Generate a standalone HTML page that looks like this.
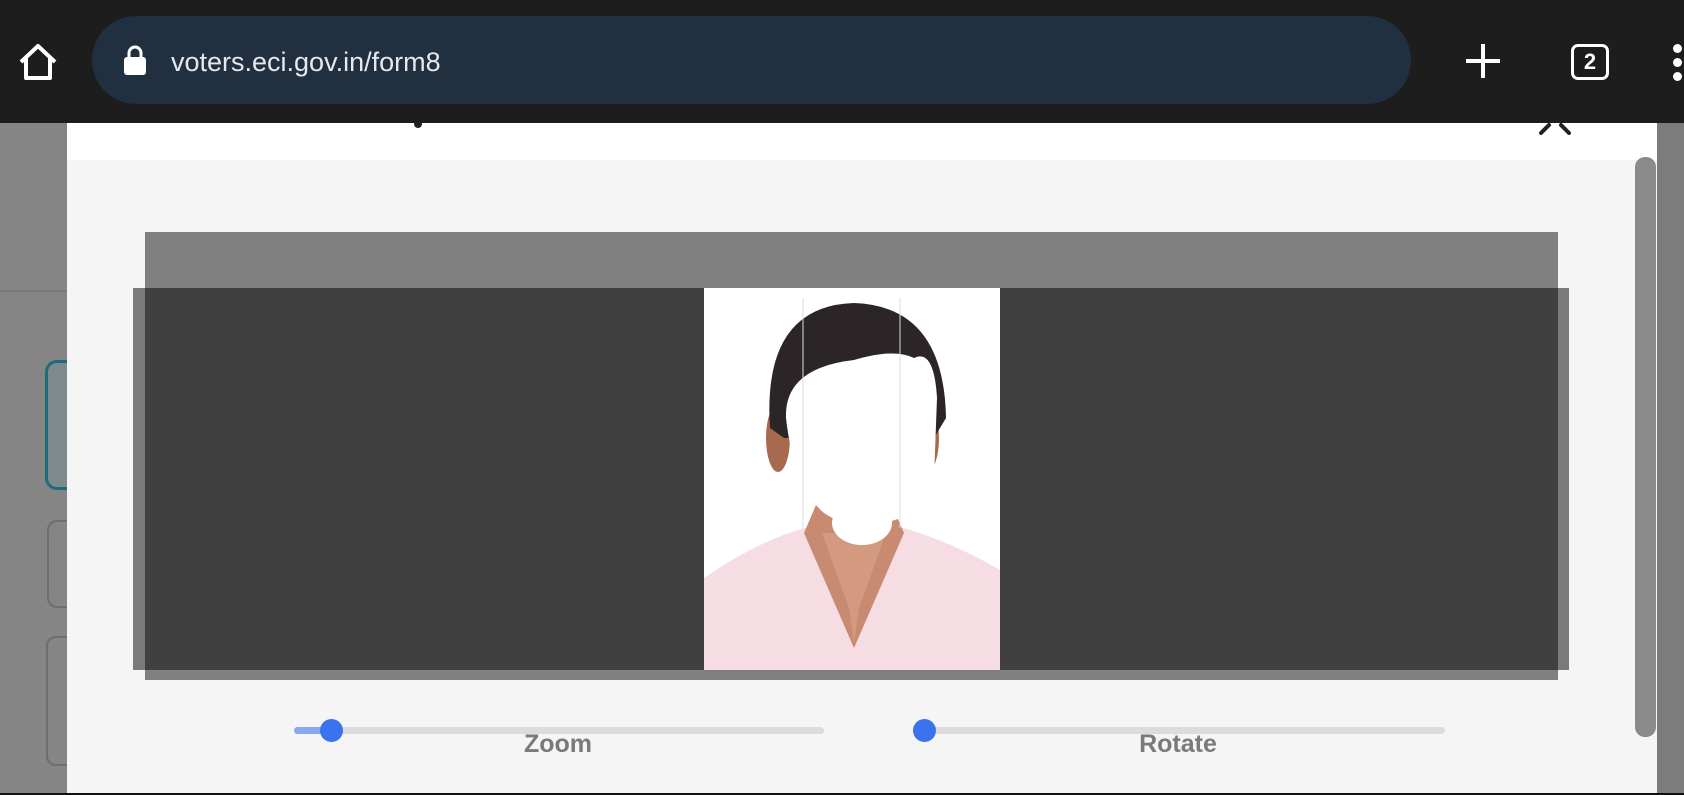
<!DOCTYPE html>
<html><head><meta charset="utf-8"><style>
*{margin:0;padding:0;box-sizing:border-box}
html,body{width:1684px;height:795px;overflow:hidden}
body{background:#858585;position:relative;font-family:"Liberation Sans",sans-serif}
.abs{position:absolute}
</style></head><body>
<div class="abs" style="left:45px;top:360px;width:40px;height:130px;border:3px solid #1f6b7a;border-radius:12px;background:#7f8a8e"></div>
<div class="abs" style="left:47px;top:520px;width:40px;height:88px;border:2px solid #6e6e6e;border-radius:10px"></div>
<div class="abs" style="left:46px;top:636px;width:40px;height:130px;border:2px solid #6e6e6e;border-radius:10px"></div>
<div class="abs" style="left:0;top:290px;width:67px;height:2px;background:#7a7a7a"></div>
<div class="abs" style="left:1657px;top:123px;width:27px;height:672px;background:#7c7c7c"></div>
<div class="abs" style="left:67px;top:110px;width:1590px;height:685px;background:#f5f5f5;border-radius:14px 14px 0 0"></div>
<div class="abs" style="left:67px;top:110px;width:1590px;height:50px;background:#fff;border-radius:14px 14px 0 0"></div>
<div class="abs" style="left:1635px;top:157px;width:21px;height:580px;background:#8a8a8a;border-radius:10px"></div>
<svg class="abs" style="left:1535px;top:115px" width="40" height="20"><path d="M6 18 L14 10 M34 18 L26 10" stroke="#222" stroke-width="4" stroke-linecap="round"/></svg>
<div class="abs" style="left:414px;top:120px;width:8px;height:8px;border-radius:4px;background:#222"></div>
<div class="abs" style="left:145px;top:232px;width:1413px;height:448px;background:#808080"></div>
<div class="abs" style="left:133px;top:288px;width:1436px;height:382px;background:rgba(0,0,0,0.5)"></div>
<svg class="abs" style="left:704px;top:288px" width="296" height="382" viewBox="0 0 296 382">
<rect width="296" height="382" fill="#fff"/>
<path d="M0 290 Q50 255 100 240 L200 240 Q250 255 296 282 L296 382 L0 382Z" fill="#f6dde4"/>
<path d="M100 245 L150 360 L200 245 L185 210 L115 210Z" fill="#c88a70"/>
<path d="M118 245 L145 320 L150 355 L155 320 L182 245" fill="#d49a80"/>
<ellipse cx="74" cy="150" rx="12" ry="34" fill="#a86a4f"/>
<ellipse cx="223" cy="150" rx="12" ry="34" fill="#a86a4f"/>
<path d="M66 140 Q58 18 150 15 Q240 18 242 130 L230 150 L80 150Z" fill="#2b2527"/>
<path d="M82 130 Q80 80 150 72 Q190 60 210 70 Q230 60 233 110 L230 190 Q225 225 180 235 Q150 245 120 225 Q90 200 82 130Z" fill="#fff"/>
<ellipse cx="158" cy="235" rx="30" ry="22" fill="#fff"/>
<line x1="99" y1="10" x2="99" y2="240" stroke="#ddd" stroke-width="1"/>
<line x1="196" y1="10" x2="196" y2="240" stroke="#ddd" stroke-width="1"/>
</svg>
<div class="abs" style="left:294px;top:727px;width:530px;height:7px;background:#dcdcdc;border-radius:4px"></div>
<div class="abs" style="left:294px;top:727px;width:40px;height:7px;background:#8aa8f0;border-radius:4px"></div>
<div class="abs" style="left:320px;top:719px;width:23px;height:23px;background:#3b72ee;border-radius:50%"></div>
<div class="abs" style="left:924px;top:727px;width:521px;height:7px;background:#dcdcdc;border-radius:4px"></div>
<div class="abs" style="left:913px;top:719px;width:23px;height:23px;background:#3b72ee;border-radius:50%"></div>
<div class="abs" style="left:458px;top:730px;width:200px;text-align:center;font-size:25px;font-weight:bold;color:#7a7a7a">Zoom</div>
<div class="abs" style="left:1078px;top:730px;width:200px;text-align:center;font-size:25px;font-weight:bold;color:#7a7a7a">Rotate</div>
<div class="abs" style="left:0;top:793px;width:1684px;height:2px;background:#111"></div>
<div class="abs" style="left:0;top:0;width:1684px;height:123px;background:#1d1d1d"></div>
<div class="abs" style="left:92px;top:16px;width:1319px;height:88px;background:#203040;border-radius:44px"></div>
<svg class="abs" style="left:16px;top:40px" width="44" height="44" viewBox="0 0 44 44"><path d="M5 22 L22 6 L39 22 M10 18 V38 H34 V18" fill="none" stroke="#fff" stroke-width="4" stroke-linejoin="round"/></svg>
<svg class="abs" style="left:122px;top:44px" width="26" height="32" viewBox="0 0 26 32"><path d="M7 14 V9 A6 6 0 0 1 19 9 V14" fill="none" stroke="#fff" stroke-width="3"/><rect x="2" y="13" width="22" height="18" rx="3" fill="#fff"/></svg>
<div class="abs" style="left:171px;top:47px;font-size:27px;color:#e6e8ee">voters.eci.gov.in/form8</div>
<svg class="abs" style="left:1464px;top:42px" width="38" height="38"><path d="M19 2 V36 M2 19 H36" stroke="#fff" stroke-width="4"/></svg>
<div class="abs" style="left:1571px;top:44px;width:38px;height:36px;border:3.5px solid #fff;border-radius:7px;color:#fff;font-size:22px;font-weight:bold;text-align:center;line-height:29px">2</div>
<div class="abs" style="left:1673px;top:44px;width:9px;height:9px;border-radius:50%;background:#fff"></div>
<div class="abs" style="left:1673px;top:58px;width:9px;height:9px;border-radius:50%;background:#fff"></div>
<div class="abs" style="left:1673px;top:72px;width:9px;height:9px;border-radius:50%;background:#fff"></div>
</body></html>
